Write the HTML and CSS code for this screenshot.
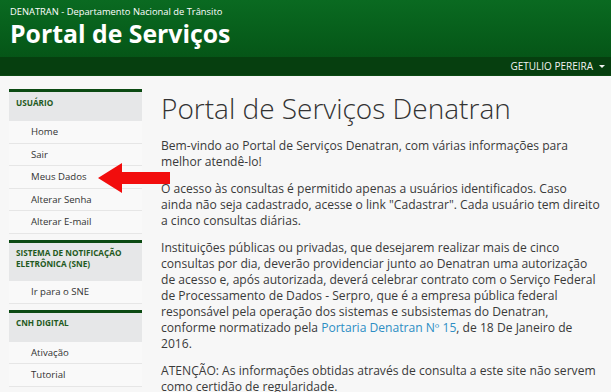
FILE: index.html
```html
<!DOCTYPE html>
<html lang="pt-BR">
<head>
    <meta charset="UTF-8">
    <meta name="viewport" content="width=device-width, initial-scale=1.0">
    <title>Portal de Serviços - Denatran</title>
    <link rel="stylesheet" href="styles.css">
</head>
<body>
    <header class="site-header">
        <div class="brand">
            <div class="brand-sub">DENATRAN - Departamento Nacional de Trânsito</div>
            <div class="brand-title">Portal de Serviços</div>
        </div>
        <nav class="user-bar">
            <a href="#" class="user-menu">GETULIO PEREIRA <span class="caret"></span></a>
        </nav>
    </header>

    <div class="page">
        <aside class="sidebar">
            <div class="side-section">
                <h3>Usuário</h3>
                <ul>
                    <li><a href="#">Home</a></li>
                    <li><a href="#">Sair</a></li>
                    <li><a href="#">Meus Dados</a></li>
                    <li><a href="#">Alterar Senha</a></li>
                    <li><a href="#">Alterar E-mail</a></li>
                </ul>
            </div>
            <div class="side-section">
                <h3>Sistema de Notificação Eletrônica (SNE)</h3>
                <ul>
                    <li><a href="#">Ir para o SNE</a></li>
                </ul>
            </div>
            <div class="side-section">
                <h3>CNH Digital</h3>
                <ul>
                    <li><a href="#">Ativação</a></li>
                    <li><a href="#">Tutorial</a></li>
                </ul>
            </div>

            <!-- seta de destaque -->
            <svg class="pointer-arrow" width="72" height="30" viewBox="0 0 72 30">
                <polygon points="0,15 24,0 24,9 72,9 72,21 24,21 24,30" fill="#f20d0d"/>
            </svg>
        </aside>

        <main class="content">
            <h1>Portal de Serviços Denatran</h1>
            <p>Bem-vindo ao Portal de Serviços Denatran, com várias informações para melhor atendê-lo!</p>
            <p>O acesso às consultas é permitido apenas a usuários identificados. Caso ainda não seja cadastrado, acesse o link "Cadastrar". Cada usuário tem direito a cinco consultas diárias.</p>
            <p>Instituições públicas ou privadas, que desejarem realizar mais de cinco consultas por dia, deverão providenciar junto ao Denatran uma autorização de acesso e, após autorizada, deverá celebrar contrato com o Serviço Federal de Processamento de Dados - Serpro, que é a empresa pública federal responsável pela operação dos sistemas e subsistemas do Denatran, conforme normatizado pela <a href="#">Portaria Denatran Nº 15</a>, de 18 De Janeiro de 2016.</p>
            <p>ATENÇÃO: As informações obtidas através de consulta a este site não servem como certidão de regularidade.</p>
        </main>
    </div>
</body>
</html>
```

FILE: styles.css
```css
* {
    margin: 0;
    padding: 0;
    box-sizing: border-box;
}

body {
    font-family: "Open Sans", "Liberation Sans", sans-serif;
    background-color: #f7f7f7;
    color: #333;
    overflow: hidden;
}

a {
    text-decoration: none;
}

/* Header */

.site-header {
    background: linear-gradient(to bottom, #0a6a21 0%, #065a19 60%, #054d14 100%);
    color: #fff;
}

.brand {
    height: 57px;
    padding: 5px 10px 0;
}

.brand-sub {
    font-size: 9.35px;
    line-height: 13px;
}

.brand-title {
    font-size: 24.8px;
    font-weight: bold;
    line-height: 30px;
}

.user-bar {
    height: 19px;
    background-color: #063f0f;
    border-bottom: 1px solid #0c4a14;
    display: flex;
    justify-content: flex-end;
    align-items: center;
    padding-right: 6px;
}

.user-menu {
    color: #f2f2f2;
    font-size: 10px;
    display: flex;
    align-items: center;
    gap: 6px;
}

.caret {
    width: 0;
    height: 0;
    border-left: 3px solid transparent;
    border-right: 3px solid transparent;
    border-top: 3px solid #f2f2f2;
}

/* Layout */

.page {
    display: flex;
    gap: 19px;
    padding: 13px 0 0 9px;
}

/* Sidebar */

.sidebar {
    position: relative;
    width: 133px;
    flex-shrink: 0;
}

.side-section {
    border-top: 3px solid #0b4a12;
    margin-bottom: 6px;
}

.side-section h3 {
    background-color: #e6e7e8;
    color: #1f5a22;
    font-size: 8.2px;
    font-weight: bold;
    text-transform: uppercase;
    line-height: 11px;
    min-height: 29px;
    padding: 4.5px 7px 12px;
}

.side-section ul {
    list-style: none;
    background-color: #f9f9f9;
}

.side-section li {
    border-bottom: 1px solid #e6e6e6;
}

.side-section li a {
    display: block;
    padding: 5px 22px;
    font-size: 9.6px;
    line-height: 11.5px;
    color: #333;
}

.pointer-arrow {
    position: absolute;
    left: 89px;
    top: 74px;
}

/* Content */

.content {
    width: 439.5px;
    padding-top: 3px;
}

.content h1 {
    font-size: 28px;
    font-weight: 300;
    line-height: 32px;
    color: #333;
    margin-bottom: 14px;
}

.content p {
    font-size: 12.1px;
    line-height: 16px;
    margin-bottom: 11px;
    color: #3a3a3a;
}

.content p a {
    color: #2d8ec4;
}
```
